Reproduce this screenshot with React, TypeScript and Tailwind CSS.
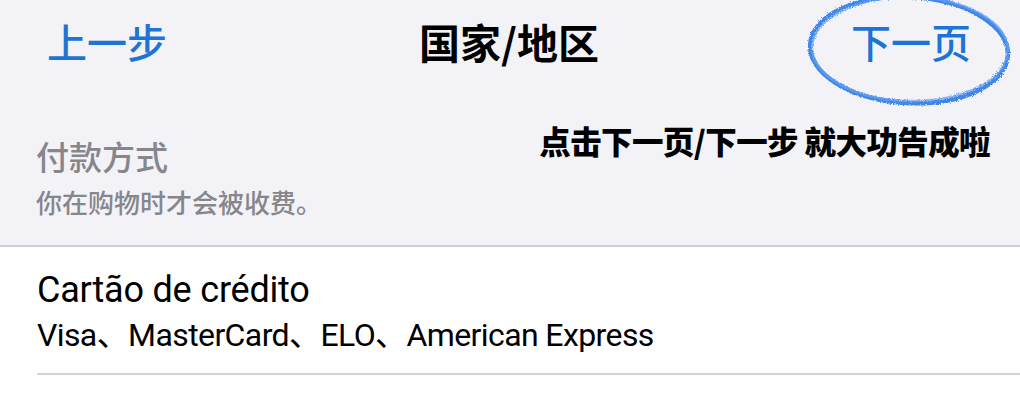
import React from "react";

const cjk = '"Noto Sans CJK SC", "Noto Sans", sans-serif';
const latin = 'Roboto, "Noto Sans CJK SC", sans-serif';

function Circle() {
  return (
    <svg
      className="absolute left-[800px] top-[-8px] pointer-events-none"
      width="220"
      height="124"
      viewBox="0 0 220 124"
    >
      <defs>
        <filter id="rough">
          <feTurbulence type="fractalNoise" baseFrequency="0.8" numOctaves="2" result="n" />
          <feDisplacementMap in="SourceGraphic" in2="n" scale="4" />
        </filter>
      </defs>
      <g filter="url(#rough)" fill="none" strokeLinecap="round">
        <ellipse cx="109" cy="58" rx="99" ry="53" stroke="#3f86e8" strokeWidth="4.5" transform="rotate(3 109 58)" />
        <ellipse cx="110" cy="57" rx="98" ry="52" stroke="#6aa3f0" strokeWidth="2.5" opacity="0.7" transform="rotate(1 110 57)" />
      </g>
    </svg>
  );
}

export default function App() {
  return (
    <div className="w-[1020px] h-[400px] overflow-hidden bg-white" style={{ fontFamily: cjk }}>
      <div className="relative bg-[#f2f2f7] h-[247px] border-b-2 border-[#cfcfd3]">
        <div className="flex items-center justify-between h-[82px] pl-[47px] pr-[49px]">
          <span className="text-[40px] font-medium text-[#1d74d4] leading-none">上一步</span>
          <span className="text-[41px] font-bold text-black leading-none">国家/地区</span>
          <span className="text-[40px] font-medium text-[#1d74d4] leading-none">下一页</span>
        </div>
        <Circle />
        <div className="flex justify-between pl-[36px] pr-[30px]">
          <div className="pt-[58px]">
            <div className="text-[33px] font-medium leading-none text-[#86868b]">付款方式</div>
            <div className="mt-[16px] text-[26px] font-medium leading-none text-[#86868b]">你在购物时才会被收费。</div>
          </div>
          <div className="pt-[43px] text-[31.5px] font-black text-black leading-none tracking-[-0.6px]">
            点击下一页/下一步 就大功告成啦
          </div>
        </div>
      </div>
      <div className="pl-[37px]">
        <div className="pt-[25px] text-[36px] leading-none text-black tracking-[-0.2px]" style={{ fontFamily: latin }}>
          Cartão de crédito
        </div>
        <div className="mt-[11px] text-[32px] leading-none text-black tracking-[-0.6px]" style={{ fontFamily: latin }}>
          Visa、MasterCard、ELO、American Express
        </div>
        <div className="mt-[22px] h-[2px] bg-[#d4d4d8]" />
      </div>
    </div>
  );
}
